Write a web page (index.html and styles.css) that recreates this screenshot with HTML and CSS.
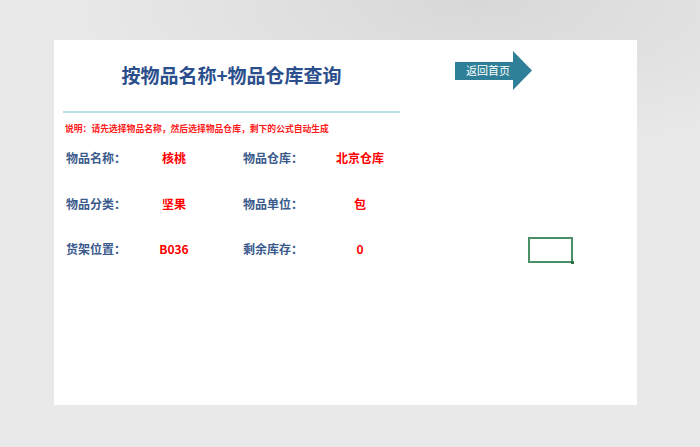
FILE: index.html
```html
<!DOCTYPE html>
<html lang="zh-CN">
<head>
    <meta charset="UTF-8">
    <meta name="viewport" content="width=device-width, initial-scale=1.0">
    <title>按物品名称+物品仓库查询</title>
    <link rel="stylesheet" href="styles.css">
</head>
<body>
    <div class="sheet">
        <div class="top">
            <div class="title-box">
                <h1>按物品名称+物品仓库查询</h1>
                <div class="rule"></div>
            </div>
            <a class="back" href="#">
                <svg width="78" height="40" viewBox="0 0 78 40">
                    <polygon points="0,11 58,11 58,0 77,19.5 58,39 58,29 0,29" fill="#2e7f97"/>
                    <text x="33" y="24" text-anchor="middle" class="back-text">返回首页</text>
                </svg>
            </a>
        </div>

        <p class="note">说明：请先选择物品名称，然后选择物品仓库，剩下的公式自动生成</p>

        <div class="fields">
            <div class="label">物品名称：</div>
            <div class="value">核桃</div>
            <div class="label second">物品仓库：</div>
            <div class="value">北京仓库</div>
            <div></div>

            <div class="label">物品分类：</div>
            <div class="value">坚果</div>
            <div class="label second">物品单位：</div>
            <div class="value">包</div>
            <div></div>

            <div class="label">货架位置：</div>
            <div class="value">B036</div>
            <div class="label second">剩余库存：</div>
            <div class="value">0</div>
            <div class="cell-wrap"><div class="cell"></div></div>
        </div>
    </div>
</body>
</html>
```

FILE: styles.css
```css
body {
    margin: 0;
    width: 700px;
    height: 447px;
    overflow: hidden;
    font-family: "Noto Sans CJK SC", "Microsoft YaHei", sans-serif;
    background: radial-gradient(ellipse 420px 160px at 68% 0%, #d8d8d8, #e9e9e9 100%);
    background-color: #e9e9e9;
}
.sheet {
    margin: 40px 0 0 54px;
    width: 574px;
    height: 365px;
    padding: 0 0 0 9px;
    background-color: #fff;
}
.top {
    display: flex;
    align-items: flex-start;
}
.title-box {
    width: 337px;
}
h1 {
    margin: 0;
    padding-top: 23px;
    font-size: 19px;
    line-height: 24px;
    font-weight: bold;
    text-align: center;
    color: #2b4f8c; /* title blue */
}
.rule {
    height: 2px;
    margin-top: 24px;
    background-color: #bbdfe9;
}
.back {
    display: block;
    margin: 11px 0 0 55px;
    line-height: 0;
}
.back-text {
    fill: #fff;
    font-size: 11px;
    font-family: "Noto Sans CJK SC", sans-serif;
}
.note {
    margin: 10px 0 0 2px;
    font-size: 8.8px;
    line-height: 12px;
    font-weight: bold;
    color: #ff1a1a;
}
.fields {
    display: grid;
    grid-template-columns: 77px 62px 118px 74px auto;
    grid-auto-rows: 45.5px;
    align-items: center;
    padding-left: 3px;
    font-size: 12px;
    font-weight: bold;
}
.label {
    color: #3a5a8c;
}
.second {
    padding-left: 38px;
}
.value {
    text-align: center;
    color: #ff0000;
}
.cell-wrap {
    padding: 2px 0 0 131px;
}
.cell {
    position: relative;
    width: 41px;
    height: 22px;
    border: 2px solid #4a8f66;
}
.cell::after {
    content: "";
    position: absolute;
    right: -3px;
    bottom: -3px;
    width: 3px;
    height: 3px;
    background-color: #2d6e47;
}
```
